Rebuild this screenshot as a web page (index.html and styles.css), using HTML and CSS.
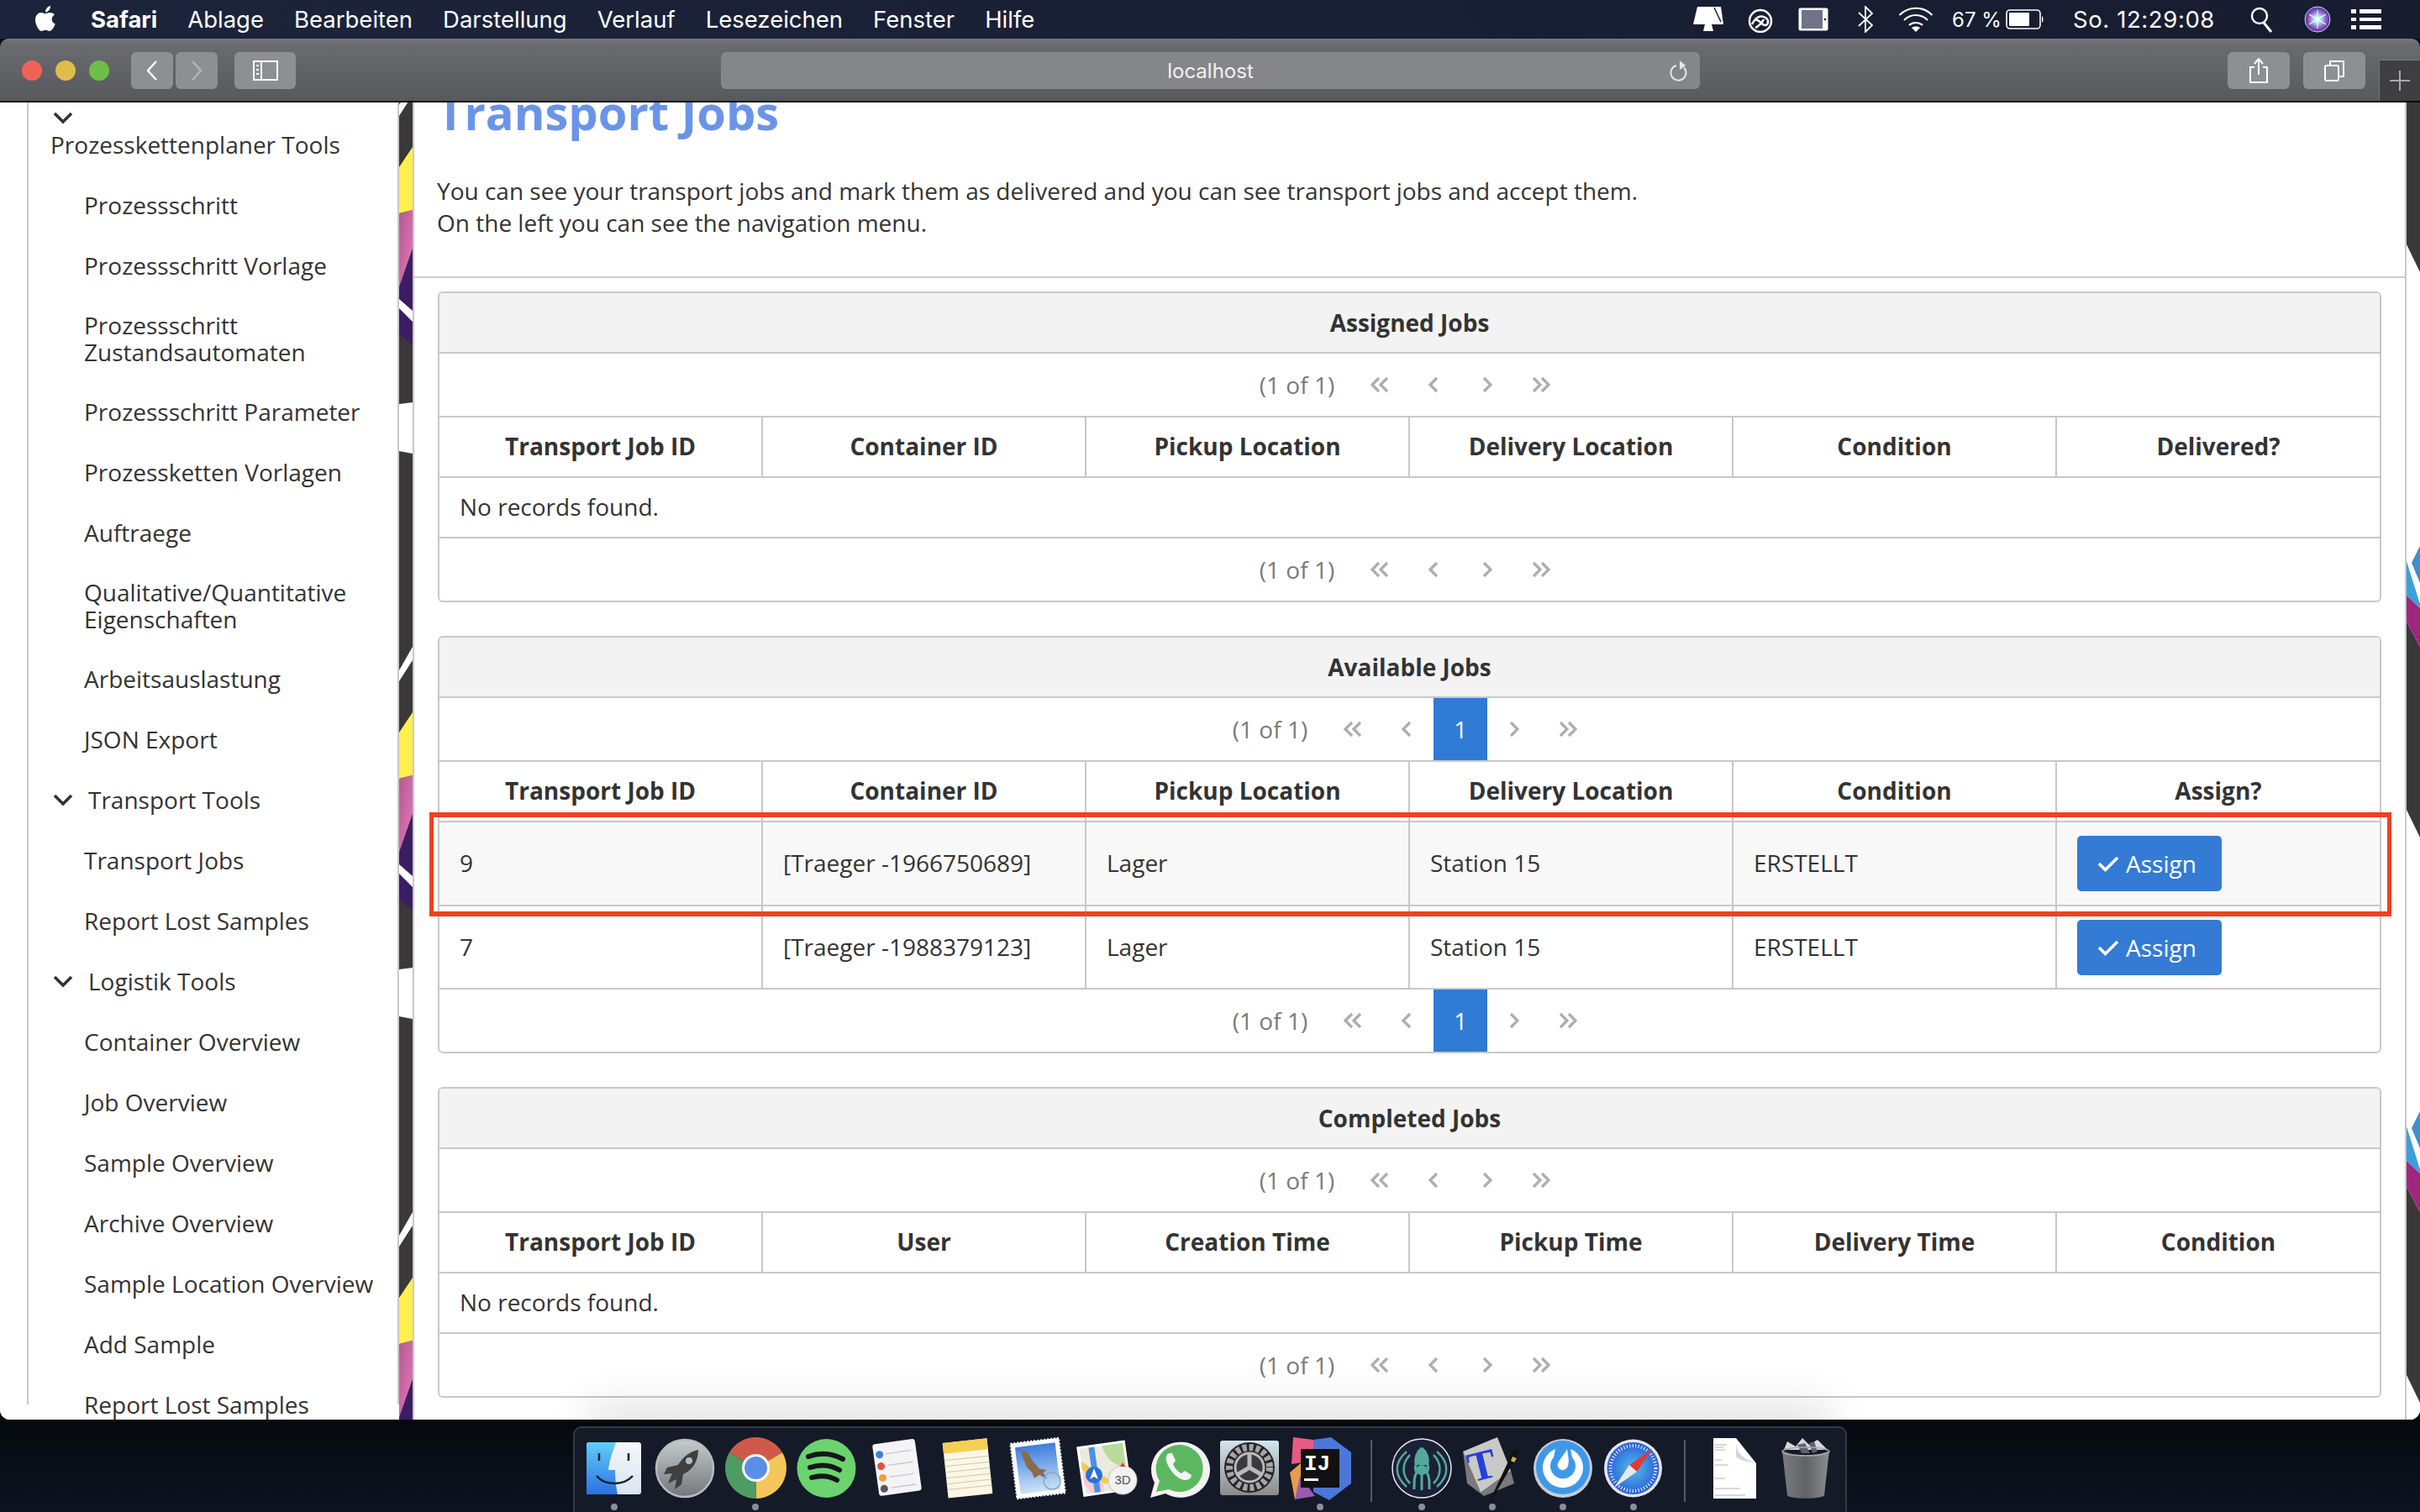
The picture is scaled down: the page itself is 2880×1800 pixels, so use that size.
FILE: index.html
```html
<!DOCTYPE html>
<html lang="de">
<head>
    <meta charset="UTF-8">
    <title>Transport Jobs</title>
    <link rel="stylesheet" href="styles.css">
</head>
<body>
    <svg class="defs" width="0" height="0">
        <defs>
            <symbol id="i-first" viewBox="0 0 24 20"><path d="M11 2 3 10l8 8M21 2l-8 8 8 8" fill="none" stroke="#adadad" stroke-width="3.2"/></symbol>
            <symbol id="i-prev" viewBox="0 0 24 20"><path d="M16 2 8 10l8 8" fill="none" stroke="#adadad" stroke-width="3.2"/></symbol>
            <symbol id="i-next" viewBox="0 0 24 20"><path d="m8 2 8 8-8 8" fill="none" stroke="#adadad" stroke-width="3.2"/></symbol>
            <symbol id="i-last" viewBox="0 0 24 20"><path d="m3 2 8 8-8 8M13 2l8 8-8 8" fill="none" stroke="#adadad" stroke-width="3.2"/></symbol>
            <symbol id="i-chevron" viewBox="0 0 30 32"><path d="m5 11 10 10 10-10" fill="none" stroke="#333" stroke-width="3.6"/></symbol>
            <pattern id="strip-left" patternUnits="userSpaceOnUse" width="16" height="673">
                <rect width="16" height="673" fill="#3a3838"/>
                <path d="M0 3 16-25v16L0 16z" fill="#fff"/>
                <path d="M0 676l16-28v16L0 689z" fill="#fff"/>
                <path d="M0 77 16 53v75L0 132z" fill="#fff04c"/>
                <path d="M0 132l16-4v46L0 220z" fill="url(#pink)"/>
                <path d="M0 220 16 174v115L0 276z" fill="#3c1d63"/>
                <path d="M0 234v11l16 16v-13z" fill="#fff"/>
                <path d="M0 359l16-2v61l-16-3z" fill="#fff"/>
            </pattern>
            <linearGradient id="pink" x1="0" y1="0" x2="1" y2="1">
                <stop offset="0" stop-color="#b35a90"/>
                <stop offset="1" stop-color="#ea76bc"/>
            </linearGradient>
            <pattern id="strip-right" patternUnits="userSpaceOnUse" width="16" height="673">
                <rect width="16" height="673" fill="#3a3838"/>
                <path d="M0 169 16 202V673H0z" fill="#fff"/>
                <path d="M0 618 16 648V673H0z" fill="#3a3838"/>
                <path d="M6 548 16 528v44z" fill="#3f8fc8"/>
                <path d="M0 546 16 597v5L0 587z" fill="#3aa0dc"/>
                <path d="M0 587 16 602v46L0 618z" fill="#a0257f"/>
            </pattern>
        </defs>
    </svg>

    <header class="menubar">
        <div class="menu-left">
            <svg class="apple" viewBox="0 0 28 34" width="28" height="34"><path d="M19 9c-2 0-3.300 1.200-5 1.200S11 9 9 9c-3.500 0-7 3-7 8.500C2 23 6 31 9.500 31c1.800 0 2.800-1.200 4.700-1.200 1.800 0 2.600 1.200 4.500 1.200 3 0 6-5 7-8.500-2.500-1-4-3-4-5.700 0-2.500 1.400-4.300 3.200-5.400C23.600 9.800 21.300 9 19 9zM14 8.500C14 4.500 17 1.500 20 1c.3 4-3 7.500-6 7.500z" fill="#fff"/></svg>
            <span class="menu-app">Safari</span>
            <span>Ablage</span>
            <span>Bearbeiten</span>
            <span>Darstellung</span>
            <span>Verlauf</span>
            <span>Lesezeichen</span>
            <span>Fenster</span>
            <span>Hilfe</span>
        </div>
        <div class="menu-right">
            <svg width="36" height="32" viewBox="0 0 36 32"><path d="M5 1h28l3 21H0z M14 22h8l2 8H12z" fill="#fff"/><path d="M25 2l8 17" stroke="#1a2036" stroke-width="1.500"/></svg>
            <svg width="40" height="32" viewBox="0 0 40 32"><circle cx="20" cy="18" r="13" fill="none" stroke="#fff" stroke-width="2.500"/><path d="M10 22c4-8 10-12 16-8s2 12-3 8-6-6-10-6M14 26c3-1 8-6 10-10" fill="none" stroke="#fff" stroke-width="2.500"/></svg>
            <svg width="38" height="30" viewBox="0 0 38 30"><rect x="1.500" y="1.500" width="35" height="27" rx="2" fill="#fff"/><rect x="5" y="4" width="25" height="22" fill="#6f7386"/><circle cx="33" cy="15" r="1.300" fill="#1a2036"/></svg>
            <svg class="menu-bt" width="20" height="32" viewBox="0 0 20 32"><path d="M2 8l16 15-8 8V1l8 8L2 24" fill="none" stroke="#fff" stroke-width="1.800"/></svg>
            <svg class="menu-wifi" width="42" height="30" viewBox="0 0 42 30"><path d="M1.500 10c11-11 28-11 39 0M7 16c8-8 20-8 28 0M13 22c4.500-4 11.500-4 16 0" fill="none" stroke="#fff" stroke-width="2.200"/><path d="M21 30l-5-5c3-2 7-2 10 0z" fill="#fff"/></svg>
            <span class="menu-pct">67 %</span>
            <svg class="menu-batt" width="46" height="24" viewBox="0 0 46 24"><rect x="1" y="1" width="40" height="22" rx="4" fill="none" stroke="#fff" stroke-width="1.600"/><rect x="4" y="4" width="24" height="16" rx="1" fill="#fff"/><path d="M43 8c2 .5 2 7.500 0 8z" fill="#fff"/></svg>
            <span class="menu-clock">So. 12:29:08</span>
            <svg class="menu-search" width="28" height="32" viewBox="0 0 28 32"><circle cx="11" cy="12" r="9" fill="none" stroke="#fff" stroke-width="2.400"/><path d="M16 20l9 11" stroke="#fff" stroke-width="3"/></svg>
            <svg class="menu-siri" width="32" height="32" viewBox="0 0 32 32"><defs><radialGradient id="siri"><stop offset="0" stop-color="#fff"/><stop offset=".35" stop-color="#8ae0e0"/><stop offset=".7" stop-color="#a24fc0"/><stop offset="1" stop-color="#2b3f9b"/></radialGradient></defs><circle cx="16" cy="16" r="15" fill="url(#siri)" stroke="#d8d8e8"/><path d="M16 5v22M6 10l20 12M6 22l20-12" stroke="#fff" stroke-width="1.500" opacity=".7"/></svg>
            <svg class="menu-list" width="36" height="26" viewBox="0 0 36 26"><path d="M0 1h6v5H0zM10 1h26v5H10zM0 11h6v4H0zM10 11h26v4H10zM0 20h6v5H0zM10 20h26v5H10z" fill="#fff"/></svg>
        </div>
    </header>

    <div class="window">
        <div class="toolbar">
            <div class="traffic">
                <span class="light light-red"></span>
                <span class="light light-yellow"></span>
                <span class="light light-green"></span>
            </div>
            <div class="nav-btns">
                <span class="tool-btn tool-nav"><svg width="18" height="26" viewBox="0 0 18 26"><path d="M14 2 4 13l10 11" fill="none" stroke="#fff" stroke-width="2.400"/></svg></span>
                <span class="tool-btn tool-nav"><svg width="18" height="26" viewBox="0 0 18 26"><path d="m4 2 10 11L4 24" fill="none" stroke="#b5b5b8" stroke-width="2.400"/></svg></span>
            </div>
            <span class="tool-btn tool-side"><svg width="30" height="24" viewBox="0 0 30 24"><rect x="1" y="1" width="28" height="22" fill="none" stroke="#fff" stroke-width="2"/><path d="M10 1v22" stroke="#fff" stroke-width="2"/><path d="M4 5h3v2H4zM4 10h3v2H4zM4 15h3v2H4z" fill="#fff"/></svg></span>
            <div class="urlbar">
                <span class="url-text">localhost</span>
                <svg class="url-reload" width="24" height="26" viewBox="0 0 24 26"><path d="M17 9.500a9 9 0 1 1-9-2.500" fill="none" stroke="#e6e6e6" stroke-width="2"/><path d="M12 1l7 6-7 5z" fill="#e6e6e6"/></svg>
            </div>
            <span class="tool-btn tool-wide"><svg width="24" height="30" viewBox="0 0 24 30"><path d="M7 11H2v18h20V11h-5M12 20V2M7 7l5-6 5 6" fill="none" stroke="#fff" stroke-width="2"/></svg></span>
            <span class="tool-btn tool-wide"><svg width="26" height="26" viewBox="0 0 26 26"><rect x="2" y="7" width="16" height="18" rx="2" fill="none" stroke="#fff" stroke-width="2"/><path d="M8 7V2h16v18h-6" fill="none" stroke="#fff" stroke-width="2"/></svg></span>
            <span class="tab-add"><svg width="24" height="24" viewBox="0 0 24 24"><path d="M12 0v24M0 12h24" stroke="#a9a9ab" stroke-width="2"/></svg></span>
        </div>

        <div class="page">
            <aside class="sidebar">
                <nav class="nav">
                    <div class="nav-head">
                        <svg class="nav-chevron" width="30" height="32"><use href="#i-chevron"/></svg>
                        <span>Prozesskettenplaner Tools</span>
                    </div>
                    <a class="nav-item">Prozessschritt</a>
                    <a class="nav-item">Prozessschritt Vorlage</a>
                    <a class="nav-item nav-item-wrap">Prozessschritt Zustandsautomaten</a>
                    <a class="nav-item">Prozessschritt Parameter</a>
                    <a class="nav-item">Prozessketten Vorlagen</a>
                    <a class="nav-item">Auftraege</a>
                    <a class="nav-item nav-item-wrap">Qualitative/Quantitative Eigenschaften</a>
                    <a class="nav-item">Arbeitsauslastung</a>
                    <a class="nav-item">JSON Export</a>
                    <div class="nav-head">
                        <svg class="nav-chevron" width="30" height="32"><use href="#i-chevron"/></svg>
                        <span>Transport Tools</span>
                    </div>
                    <a class="nav-item">Transport Jobs</a>
                    <a class="nav-item">Report Lost Samples</a>
                    <div class="nav-head">
                        <svg class="nav-chevron" width="30" height="32"><use href="#i-chevron"/></svg>
                        <span>Logistik Tools</span>
                    </div>
                    <a class="nav-item">Container Overview</a>
                    <a class="nav-item">Job Overview</a>
                    <a class="nav-item">Sample Overview</a>
                    <a class="nav-item">Archive Overview</a>
                    <a class="nav-item">Sample Location Overview</a>
                    <a class="nav-item">Add Sample</a>
                    <a class="nav-item">Report Lost Samples</a>
                </nav>
            </aside>

            <svg class="strip"><rect width="16" height="1568" fill="url(#strip-left)"/></svg>

            <main class="main">
                <div class="page-head">
                    <h1>Transport Jobs</h1>
                    <p>You can see your transport jobs and mark them as delivered and you can see transport jobs and accept them.<br>On the left you can see the navigation menu.</p>
                </div>

                <section class="panel">
                    <div class="panel-title">Assigned Jobs</div>
                    <div class="pager pager-top">
                        <span class="pager-text">(1 of 1)</span>
                        <a class="pager-link"><svg width="24" height="20"><use href="#i-first"/></svg></a>
                        <a class="pager-link"><svg width="24" height="20"><use href="#i-prev"/></svg></a>
                        <a class="pager-link"><svg width="24" height="20"><use href="#i-next"/></svg></a>
                        <a class="pager-link"><svg width="24" height="20"><use href="#i-last"/></svg></a>
                    </div>
                    <table class="jobs">
                        <thead>
                            <tr><th>Transport Job ID</th><th>Container ID</th><th>Pickup Location</th><th>Delivery Location</th><th>Condition</th><th>Delivered?</th></tr>
                        </thead>
                        <tbody>
                            <tr><td class="empty" colspan="6">No records found.</td></tr>
                        </tbody>
                    </table>
                    <div class="pager">
                        <span class="pager-text">(1 of 1)</span>
                        <a class="pager-link"><svg width="24" height="20"><use href="#i-first"/></svg></a>
                        <a class="pager-link"><svg width="24" height="20"><use href="#i-prev"/></svg></a>
                        <a class="pager-link"><svg width="24" height="20"><use href="#i-next"/></svg></a>
                        <a class="pager-link"><svg width="24" height="20"><use href="#i-last"/></svg></a>
                    </div>
                </section>

                <section class="panel">
                    <div class="panel-title">Available Jobs</div>
                    <div class="pager pager-top">
                        <span class="pager-text">(1 of 1)</span>
                        <a class="pager-link"><svg width="24" height="20"><use href="#i-first"/></svg></a>
                        <a class="pager-link"><svg width="24" height="20"><use href="#i-prev"/></svg></a>
                        <a class="pager-link pager-active">1</a>
                        <a class="pager-link"><svg width="24" height="20"><use href="#i-next"/></svg></a>
                        <a class="pager-link"><svg width="24" height="20"><use href="#i-last"/></svg></a>
                    </div>
                    <table class="jobs">
                        <thead>
                            <tr><th>Transport Job ID</th><th>Container ID</th><th>Pickup Location</th><th>Delivery Location</th><th>Condition</th><th>Assign?</th></tr>
                        </thead>
                        <tbody>
                            <tr class="row-odd">
                                <td>9</td><td>[Traeger -1966750689]</td><td>Lager</td><td>Station 15</td><td>ERSTELLT</td>
                                <td class="btn-cell"><button class="btn-assign"><svg width="26" height="20" viewBox="0 0 26 20"><path d="m2 10 7.500 7.500L24 3" fill="none" stroke="#fff" stroke-width="3.600"/></svg>Assign</button></td>
                            </tr>
                            <tr class="row-even">
                                <td>7</td><td>[Traeger -1988379123]</td><td>Lager</td><td>Station 15</td><td>ERSTELLT</td>
                                <td class="btn-cell"><button class="btn-assign"><svg width="26" height="20" viewBox="0 0 26 20"><path d="m2 10 7.500 7.500L24 3" fill="none" stroke="#fff" stroke-width="3.600"/></svg>Assign</button></td>
                            </tr>
                        </tbody>
                    </table>
                    <div class="pager">
                        <span class="pager-text">(1 of 1)</span>
                        <a class="pager-link"><svg width="24" height="20"><use href="#i-first"/></svg></a>
                        <a class="pager-link"><svg width="24" height="20"><use href="#i-prev"/></svg></a>
                        <a class="pager-link pager-active">1</a>
                        <a class="pager-link"><svg width="24" height="20"><use href="#i-next"/></svg></a>
                        <a class="pager-link"><svg width="24" height="20"><use href="#i-last"/></svg></a>
                    </div>
                    <div class="highlight"></div>
                </section>

                <section class="panel">
                    <div class="panel-title">Completed Jobs</div>
                    <div class="pager pager-top">
                        <span class="pager-text">(1 of 1)</span>
                        <a class="pager-link"><svg width="24" height="20"><use href="#i-first"/></svg></a>
                        <a class="pager-link"><svg width="24" height="20"><use href="#i-prev"/></svg></a>
                        <a class="pager-link"><svg width="24" height="20"><use href="#i-next"/></svg></a>
                        <a class="pager-link"><svg width="24" height="20"><use href="#i-last"/></svg></a>
                    </div>
                    <table class="jobs">
                        <thead>
                            <tr><th>Transport Job ID</th><th>User</th><th>Creation Time</th><th>Pickup Time</th><th>Delivery Time</th><th>Condition</th></tr>
                        </thead>
                        <tbody>
                            <tr><td class="empty" colspan="6">No records found.</td></tr>
                        </tbody>
                    </table>
                    <div class="pager">
                        <span class="pager-text">(1 of 1)</span>
                        <a class="pager-link"><svg width="24" height="20"><use href="#i-first"/></svg></a>
                        <a class="pager-link"><svg width="24" height="20"><use href="#i-prev"/></svg></a>
                        <a class="pager-link"><svg width="24" height="20"><use href="#i-next"/></svg></a>
                        <a class="pager-link"><svg width="24" height="20"><use href="#i-last"/></svg></a>
                    </div>
                </section>
            </main>

            <svg class="strip strip-right"><rect width="16" height="1568" fill="url(#strip-right)"/></svg>
            <div class="dock-shade"></div>
        </div>
    </div>

    <footer class="desktop">
        <div class="dock">
            <!-- finder -->
            <div class="dock-slot dock-open">
                <svg width="84" height="78" viewBox="0 0 84 78">
                    <defs>
                        <linearGradient id="fl" x1="0" y1="0" x2="0" y2="1"><stop offset="0" stop-color="#5fd0fb"/><stop offset="1" stop-color="#2c6fe6"/></linearGradient>
                        <linearGradient id="fr" x1="0" y1="0" x2="0" y2="1"><stop offset="0" stop-color="#f5f7fa"/><stop offset="1" stop-color="#d8e5f2"/></linearGradient>
                    </defs>
                    <rect x="9" y="7" width="65" height="62" rx="3" fill="url(#fr)"/>
                    <path d="M12 7h32c-4 12-8 22-9 33h8c0 10 1 20 3 29H12a3 3 0 0 1-3-3V10a3 3 0 0 1 3-3z" fill="url(#fl)"/>
                    <path d="M24 20v9M59 20v9" stroke="#222" stroke-width="2.500"/>
                    <path d="M21 47c10 12 32 12 43 0" fill="none" stroke="#16202e" stroke-width="2.500"/>
                </svg>
            </div>
            <!-- launchpad -->
            <div class="dock-slot">
                <svg width="84" height="78" viewBox="0 0 84 78">
                    <defs><linearGradient id="lp" x1="0" y1="0" x2="0" y2="1"><stop offset="0" stop-color="#c6cbcd"/><stop offset="1" stop-color="#74767a"/></linearGradient></defs>
                    <circle cx="42" cy="38" r="34" fill="url(#lp)" stroke="#b9bcbe" stroke-width="2.500"/>
                    <path d="M58 16c-10 2-18 8-24 18l-13 3-4 8 10-1-5 12 10-5-2 12 8-6 2-12C52 40 58 28 58 16z" fill="#3d3f41"/>
                    <circle cx="47" cy="29" r="4" fill="#b8bbbd"/>
                </svg>
            </div>
            <!-- chrome -->
            <div class="dock-slot dock-open">
                <svg width="84" height="78" viewBox="0 0 84 78">
                    <path d="M42.500 37.500 10.900 19.250A36.500 36.500 0 0 1 74.100 19.250z" fill="#cf5a4b"/>
                    <path d="M42.500 37.500 74.100 19.250A36.500 36.500 0 0 1 42.500 74z" fill="#f4c75a"/>
                    <path d="M42.500 37.500 42.500 74A36.500 36.500 0 0 1 10.900 19.250z" fill="#4e9c63"/>
                    <circle cx="42.500" cy="37.500" r="16.500" fill="#fff"/>
                    <circle cx="42.500" cy="37.500" r="13.500" fill="#5a8fe8"/>
                </svg>
            </div>
            <!-- spotify -->
            <div class="dock-slot">
                <svg width="84" height="78" viewBox="0 0 84 78">
                    <circle cx="42.500" cy="38" r="35" fill="#6cd36e"/>
                    <path d="M21 24c14-5 28-4 41 3M23 37c12-4 25-3 35 3M25 49c10-3 21-2 30 3" fill="none" stroke="#14161a" stroke-width="6" stroke-linecap="round"/>
                </svg>
            </div>
            <!-- reminders -->
            <div class="dock-slot">
                <svg width="84" height="78" viewBox="0 0 84 78">
                    <g transform="rotate(-8 42 37)">
                        <rect x="17" y="6" width="51" height="62" rx="3" fill="#f4f4f6"/>
                        <circle cx="24" cy="19" r="4.500" fill="#3f7ee0"/><circle cx="24" cy="33" r="4.500" fill="#e0533f"/><circle cx="24" cy="47" r="4.500" fill="#eba23b"/><circle cx="24" cy="60" r="4.500" fill="#555860"/>
                        <path d="M32 19h30M32 33h30M32 47h30M32 60h30" stroke="#c8c8cc" stroke-width="1.300"/>
                    </g>
                </svg>
            </div>
            <!-- notes -->
            <div class="dock-slot">
                <svg width="84" height="78" viewBox="0 0 84 78">
                    <g transform="rotate(-6 42 38)">
                        <rect x="16" y="5" width="53" height="66" fill="#fbf7e4"/>
                        <rect x="16" y="5" width="53" height="13" fill="#f5cf55"/>
                        <path d="M16 26h53M16 33h53M16 40h53M16 47h53M16 54h53M16 61h53" stroke="#ccc7b2" stroke-width="1"/>
                    </g>
                </svg>
            </div>
            <!-- mail -->
            <div class="dock-slot">
                <svg width="84" height="78" viewBox="0 0 84 78">
                    <defs><linearGradient id="sky" x1="0" y1="0" x2="0" y2="1"><stop offset="0" stop-color="#3c7de0"/><stop offset="1" stop-color="#cfe3f6"/></linearGradient></defs>
                    <g transform="rotate(-7 42 37)">
                        <rect x="13" y="5" width="58" height="66" fill="#fff" stroke="#fff" stroke-width="2" stroke-dasharray="2 2"/>
                        <rect x="18" y="10" width="48" height="56" fill="url(#sky)"/>
                        <path d="M24 14l8 3 4 10 8 12 8 2-4 3 3 8-8-6-7 3-1-6-6-8-3-12z" fill="#8a6b4a"/>
                        <circle cx="57" cy="55" r="10" fill="none" stroke="#8aa6c0" stroke-width="1.500"/>
                    </g>
                </svg>
            </div>
            <!-- maps -->
            <div class="dock-slot">
                <svg width="84" height="78" viewBox="0 0 84 78">
                    <g transform="rotate(-8 38 38)">
                        <rect x="8" y="8" width="58" height="60" fill="#fff"/>
                        <rect x="11" y="11" width="52" height="54" fill="#ebeae0"/>
                        <path d="M38 11h25v28C50 38 40 26 38 11z" fill="#b9dc9a"/>
                        <path d="M11 34l22 18v13H18l-7-12z" fill="#f6cbd4"/>
                        <path d="M11 26l30 26-4 5L11 36z" fill="#f1c94d"/>
                        <rect x="22" y="11" width="7" height="54" fill="#4f90e0"/>
                    </g>
                    <circle cx="25" cy="46" r="10" fill="#2a70dc"/><path d="M25 38l5 13-5-3-5 3z" fill="#fff"/>
                    <circle cx="59" cy="52" r="17" fill="#f2f2f2" stroke="#c0c0c0"/>
                    <text class="dock-3d" x="59" y="57" text-anchor="middle">3D</text>
                    <path d="M59 31l3 5h-6z" fill="#d93a2f"/>
                </svg>
            </div>
            <!-- whatsapp -->
            <div class="dock-slot">
                <svg width="84" height="78" viewBox="0 0 84 78">
                    <path d="M8 73l5-18a35 33 0 1 1 13 13z" fill="#f2f2f2"/>
                    <path d="M15 66l4-13a28 28 0 1 1 11 10z" fill="#5cb85f"/>
                    <path d="M30 20c-5 3-4 10 1 18s12 14 19 14c4 0 7-3 7-6l-8-5-4 3c-3-1-8-6-10-11l3-4-4-9z" fill="#f5f5f5"/>
                </svg>
            </div>
            <!-- system preferences -->
            <div class="dock-slot">
                <svg width="84" height="78" viewBox="0 0 84 78">
                    <defs><linearGradient id="sp" x1="0" y1="0" x2="0" y2="1"><stop offset="0" stop-color="#d2e6ee"/><stop offset="1" stop-color="#8a8a8a"/></linearGradient></defs>
                    <rect x="7" y="5" width="70" height="65" rx="3" fill="url(#sp)"/>
                    <circle cx="42" cy="37" r="30" fill="#26262a"/>
                    <circle cx="42" cy="37" r="24" fill="none" stroke="#a6a6a6" stroke-width="8" stroke-dasharray="5 3"/>
                    <circle cx="42" cy="37" r="17" fill="#3a3a3e" stroke="#b9b9b9" stroke-width="3"/>
                    <path d="M42 37V20M42 37 27 46M42 37l15 9" stroke="#b9b9b9" stroke-width="5"/>
                </svg>
            </div>
            <!-- intellij -->
            <div class="dock-slot dock-open">
                <svg width="84" height="78" viewBox="0 0 84 78">
                    <path d="M10 1l24 3 6 24-32 5z" fill="#e85a84"/>
                    <path d="M34 4 55 1l24 18v37L53 76 34 66z" fill="#4a78d8"/>
                    <path d="M6 43l14-12 18 20-26 24z" fill="#e89c4c"/>
                    <path d="M12 75l6-28 18 24z" fill="#9a5bb0"/>
                    <rect x="19" y="15" width="46" height="46" fill="#111"/>
                    <text class="dock-ij" x="23" y="40">IJ</text>
                    <rect x="23" y="50" width="17" height="3" fill="#fff"/>
                </svg>
            </div>
            <div class="dock-sep"></div>
            <!-- gitkraken -->
            <div class="dock-slot dock-open">
                <svg width="84" height="78" viewBox="0 0 84 78">
                    <circle cx="42" cy="38" r="35" fill="#1c2036" stroke="#e8e8ec" stroke-width="1.500"/>
                    <path d="M42 14c-6 5-8 13-7 20-1 3-1 6 1 9-3 4-3 10-3 20M42 14c6 5 8 13 7 20 1 3 1 6-1 9 3 4 3 10 3 20M42 45v19" fill="none" stroke="#52a99b" stroke-width="3"/>
                    <path d="M42 14c-6 5-8 13-7 20h14c1-7-1-15-7-20z" fill="#52a99b"/>
                    <ellipse cx="42" cy="40" rx="7" ry="6" fill="#52a99b"/>
                    <path d="M28 22c-10 10-10 24 0 34M56 22c10 10 10 24 0 34M24 18c-15 13-15 29 0 42M60 18c15 13 15 29 0 42" fill="none" stroke="#52a99b" stroke-width="2.500"/>
                </svg>
            </div>
            <!-- texteditor -->
            <div class="dock-slot dock-open">
                <svg width="84" height="78" viewBox="0 0 84 78">
                    <path d="M7 18 48 1l16 40-36 26z" fill="#c9c9c9"/>
                    <path d="M7 18l21 49 36-26 4 15-36 15L12 56z" fill="#7a7a7a"/>
                    <text class="dock-t" x="31" y="51" text-anchor="middle" transform="rotate(-14 31 40)">T</text>
                    <path d="M74 18 68 15 41 72l-1 4 3-3 28-49z" fill="#111"/>
                    <path d="M66 24l5 2-3 5-4-2z" fill="#c9b24a"/>
                </svg>
            </div>
            <!-- mattermost -->
            <div class="dock-slot dock-open">
                <svg width="84" height="78" viewBox="0 0 84 78">
                    <circle cx="42" cy="38" r="35" fill="#c8ccd2"/>
                    <circle cx="42" cy="37" r="32" fill="#3e98ea"/>
                    <path d="M33 15a24 24 0 1 0 18 0l2 10a15 15 0 1 1-22 0z" fill="#fff"/>
                    <path d="M47 15c1 8 3 14 1 20s-10 7-12 1 8-14 11-21z" fill="#fff"/>
                </svg>
            </div>
            <!-- safari -->
            <div class="dock-slot dock-open">
                <svg width="84" height="78" viewBox="0 0 84 78">
                    <defs><radialGradient id="sf"><stop offset="0" stop-color="#4fc0e8"/><stop offset="1" stop-color="#2d5fd8"/></radialGradient></defs>
                    <circle cx="41.500" cy="38" r="34.500" fill="#e6e6e8"/>
                    <circle cx="41.500" cy="38" r="31" fill="url(#sf)"/>
                    <circle cx="41.500" cy="38" r="27" fill="none" stroke="#fff" stroke-width="4" stroke-dasharray="1 2.500"/>
                    <path d="M64 15 37 34l9 8z" fill="#e23a35"/>
                    <path d="M19 61l18-27 9 8z" fill="#e8e8e8"/>
                </svg>
            </div>
            <div class="dock-sep"></div>
            <!-- document -->
            <div class="dock-slot">
                <svg width="84" height="78" viewBox="0 0 84 78">
                    <path d="M16 2h27l24 30v42H16z" fill="#fff"/>
                    <path d="M43 2c0 14 2 22 24 30-8-2-18-2-24-8z" fill="#d6d6d8"/>
                    <path d="M18 10h14M18 13h10M18 16h12M18 28h8M18 34h16M18 50h12M18 62h30M18 70h36" stroke="#b2b2b2" stroke-width="1"/>
                </svg>
            </div>
            <!-- trash -->
            <div class="dock-slot">
                <svg width="84" height="78" viewBox="0 0 84 78">
                    <defs><linearGradient id="tr" x1="0" y1="0" x2="1" y2="0"><stop offset="0" stop-color="#7a7c80"/><stop offset=".5" stop-color="#606266"/><stop offset="1" stop-color="#8a8c90"/></linearGradient></defs>
                    <path d="M20 6l10 6 8-10 8 8 10-6 12 12H16z" fill="#d8d8dc"/>
                    <path d="M32 10l5 10h10l-6-12zM46 8l4 12 6-2-4-12z" fill="#5a6270"/>
                    <path d="M14 17c14 7 42 7 56 0l-6 53c-2 5-42 5-44 0z" fill="url(#tr)"/>
                    <ellipse cx="42" cy="18" rx="28" ry="5" fill="none" stroke="#a8a8ac" stroke-width="1.500"/>
                </svg>
            </div>
        </div>
    </footer>
</body>
</html>
```

FILE: styles.css
```css
* {
    box-sizing: border-box;
}

html, body {
    height: 100%;
}

body {
    margin: 0;
    width: 2880px;
    height: 1800px;
    overflow: hidden;
    display: flex;
    flex-direction: column;
    background: #070c15;
    font-family: "Open Sans", sans-serif;
    color: #333;
}

.defs {
    position: absolute;
}

/* menu bar */
.menubar {
    height: 46px;
    flex: none;
    display: flex;
    justify-content: space-between;
    align-items: center;
    background: linear-gradient(90deg, #1c243b, #171c2f);
    color: #fff;
    font-family: Inter, sans-serif;
    font-size: 27.5px;
}

.menu-left {
    display: flex;
    align-items: center;
    gap: 36px;
    padding-left: 40px;
}

.apple {
    margin-right: 4px;
}

.menu-app {
    font-weight: 700;
}

.menu-right {
    display: flex;
    align-items: center;
    gap: 24px;
    padding-right: 46px;
}

.menu-bt {
    margin-left: 9px;
}

.menu-wifi {
    margin-left: 5px;
}

.menu-pct {
    width: 56px;
    margin-left: -2px;
    font-size: 24px;
    white-space: nowrap;
}

.menu-batt {
    margin-left: -16px;
}

.menu-clock {
    width: 171px;
    margin-left: 10px;
    letter-spacing: 0.6px;
    white-space: nowrap;
}

.menu-search {
    margin-left: 16px;
}

.menu-siri {
    margin-left: 12px;
}

/* browser window */
.window {
    height: 1644px;
    flex: none;
    display: flex;
    flex-direction: column;
    border-radius: 10px 10px 12px 12px;
    overflow: hidden;
}

.toolbar {
    height: 76px;
    flex: none;
    display: flex;
    align-items: flex-start;
    padding-top: 16px;
    background: linear-gradient(180deg, #77787b 0, #6a6b6f 6px, #58595c 100%);
    border-bottom: 2px solid #0b0b0c;
    position: relative;
}

.traffic {
    display: flex;
    gap: 16px;
    padding: 10px 0 0 26px;
}

.light {
    width: 24px;
    height: 24px;
    border-radius: 50%;
}

.light-red { background: #ef6259; }
.light-yellow { background: #e0bd4b; }
.light-green { background: #6fbe4a; }

.nav-btns {
    display: flex;
    gap: 3px;
    margin-left: 26px;
}

.tool-btn {
    height: 44px;
    display: flex;
    align-items: center;
    justify-content: center;
    background: #8e8f92;
    border-radius: 6px;
}

.tool-nav {
    width: 50px;
}

.tool-side {
    width: 73px;
    margin-left: 20px;
}

.tool-wide {
    width: 74px;
    margin-right: 16px;
}

.urlbar {
    width: 1165px;
    height: 44px;
    margin: 0 628px 0 506px;
    display: flex;
    align-items: center;
    justify-content: center;
    background: #858689;
    border-radius: 6px;
    color: #f2f2f2;
    font-family: Inter, sans-serif;
    font-size: 24px;
    position: relative;
}

.url-reload {
    position: absolute;
    right: 12px;
    top: 9px;
}

.tab-add {
    position: absolute;
    right: 0;
    bottom: 0;
    width: 49px;
    height: 49px;
    display: flex;
    align-items: center;
    justify-content: center;
    background: #3f3f41;
    border-left: 1px solid #77787b;
    border-top: 1px solid #77787b;
}

/* page */
.page {
    flex: 1;
    min-height: 0;
    display: flex;
    background: #fff;
    position: relative;
    overflow: hidden;
}

.sidebar {
    width: 475px;
    flex: none;
    padding-left: 32px;
    background: #fff;
    overflow: hidden;
}

.nav {
    height: 100%;
    border-left: 2px solid #c8c8c8;
    border-right: 2px solid #c8c8c8;
    font-size: 28px;
    line-height: 32px;
}

.nav-head {
    display: flex;
    flex-wrap: wrap;
    padding: 20px 40px 20px 26px;
}

.nav-head:first-child {
    margin-top: -18px;
}

.nav-chevron {
    margin-right: 15px;
    flex: none;
}

.nav-item {
    display: block;
    padding: 20px 20px 20px 66px;
}

.nav-item-wrap {
    padding-top: 19px;
    padding-bottom: 19px;
}

.strip {
    width: 16px;
    height: 100%;
    flex: none;
}

.main {
    flex: 1;
    min-width: 0;
    border-left: 2px solid #c8c8c8;
    border-right: 2px solid #c8c8c8;
    overflow: hidden;
    font-size: 28px;
}

.page-head {
    padding: 0 28px 45px 27px;
    border-bottom: 2px solid #ccc;
}

h1 {
    margin: -21px 0 43px;
    font-size: 56px;
    line-height: 64px;
    font-weight: 700;
    color: #6b94e8;
}

.page-head p {
    margin: 0;
    line-height: 38px;
}

/* panels */
.panel {
    position: relative;
    margin: 16px 28px 0;
    border: 2px solid #c8c8c8;
    border-radius: 6px;
}

.panel + .panel {
    margin-top: 40px;
}

.panel-title {
    height: 72px;
    display: flex;
    align-items: center;
    justify-content: center;
    background: #f3f3f3;
    border-bottom: 2px solid #c8c8c8;
    border-radius: 4px 4px 0 0;
    font-weight: 700;
}

.pager {
    height: 74px;
    display: flex;
    align-items: center;
    justify-content: center;
    padding-left: 10px;
    color: #7a7a7a;
}

.pager-top {
    height: 76px;
    border-bottom: 2px solid #c8c8c8;
}

.pager-text {
    margin-right: 22px;
}

.pager-link {
    width: 64px;
    height: 74px;
    display: flex;
    align-items: center;
    justify-content: center;
}

.pager-active {
    background: #2f7bd6;
    color: #fff;
}

.jobs {
    width: 100%;
    border-collapse: separate;
    border-spacing: 0;
    table-layout: fixed;
    color: #333;
}

.jobs th, .jobs td {
    padding: 0 24px 2px;
    border-right: 2px solid #c8c8c8;
    border-bottom: 2px solid #c8c8c8;
    text-align: left;
}

.jobs th:last-child, .jobs td:last-child {
    border-right: none;
}

.jobs th {
    width: 385px;
    height: 72px;
    text-align: center;
    font-weight: 700;
}

.jobs th:last-child {
    width: auto;
}

.jobs .empty {
    height: 72px;
}

.row-odd td {
    height: 100px;
    background: #f8f8f8;
}

.row-even td {
    height: 99px;
}

.jobs .btn-cell {
    padding-bottom: 0;
}

.btn-assign {
    width: 172px;
    height: 66px;
    display: flex;
    align-items: center;
    gap: 8px;
    padding: 0 0 0 24px;
    background: #337bd4;
    border: none;
    border-radius: 5px;
    color: #fff;
    font-family: "Open Sans", sans-serif;
    font-size: 28px;
}

.highlight {
    position: absolute;
    left: -12px;
    top: 208px;
    width: 2335px;
    height: 124px;
    border: 5px solid #ee4123;
    border-width: 6px 5px;
    pointer-events: none;
}

.dock-shade {
    position: absolute;
    left: 700px;
    bottom: -30px;
    width: 1480px;
    height: 50px;
    background: rgba(0, 0, 0, 0.1);
    filter: blur(22px);
    pointer-events: none;
}

/* dock */
.desktop {
    flex: 1;
    min-height: 0;
    display: flex;
    justify-content: center;
    padding-top: 8px;
    background: linear-gradient(180deg, #05090f, #0d1420);
}

.dock {
    display: flex;
    padding: 10px 5px 0;
    height: 110px;
    background: #141a28;
    border: 2px solid #343946;
    border-bottom: none;
    border-radius: 10px 10px 0 0;
}

.dock-slot {
    width: 84px;
    height: 92px;
    position: relative;
}

.dock-slot svg {
    display: block;
}

.dock-open::after {
    content: "";
    position: absolute;
    left: 38px;
    top: 80px;
    width: 8px;
    height: 8px;
    border-radius: 50%;
    background: #8a8f9c;
}

.dock-sep {
    width: 37px;
    height: 74px;
    margin-top: 4px;
    position: relative;
}

.dock-sep::before {
    content: "";
    position: absolute;
    left: 18px;
    top: 0;
    width: 2px;
    height: 74px;
    background: #545966;
}

.dock-3d {
    font-family: "Liberation Sans", sans-serif;
    font-size: 15px;
    fill: #555;
}

.dock-ij {
    font-family: "Liberation Mono", monospace;
    font-size: 26px;
    font-weight: 700;
    fill: #fff;
}

.dock-t {
    font-family: "Liberation Serif", serif;
    font-size: 50px;
    font-weight: 700;
    fill: #2440d8;
}
```
